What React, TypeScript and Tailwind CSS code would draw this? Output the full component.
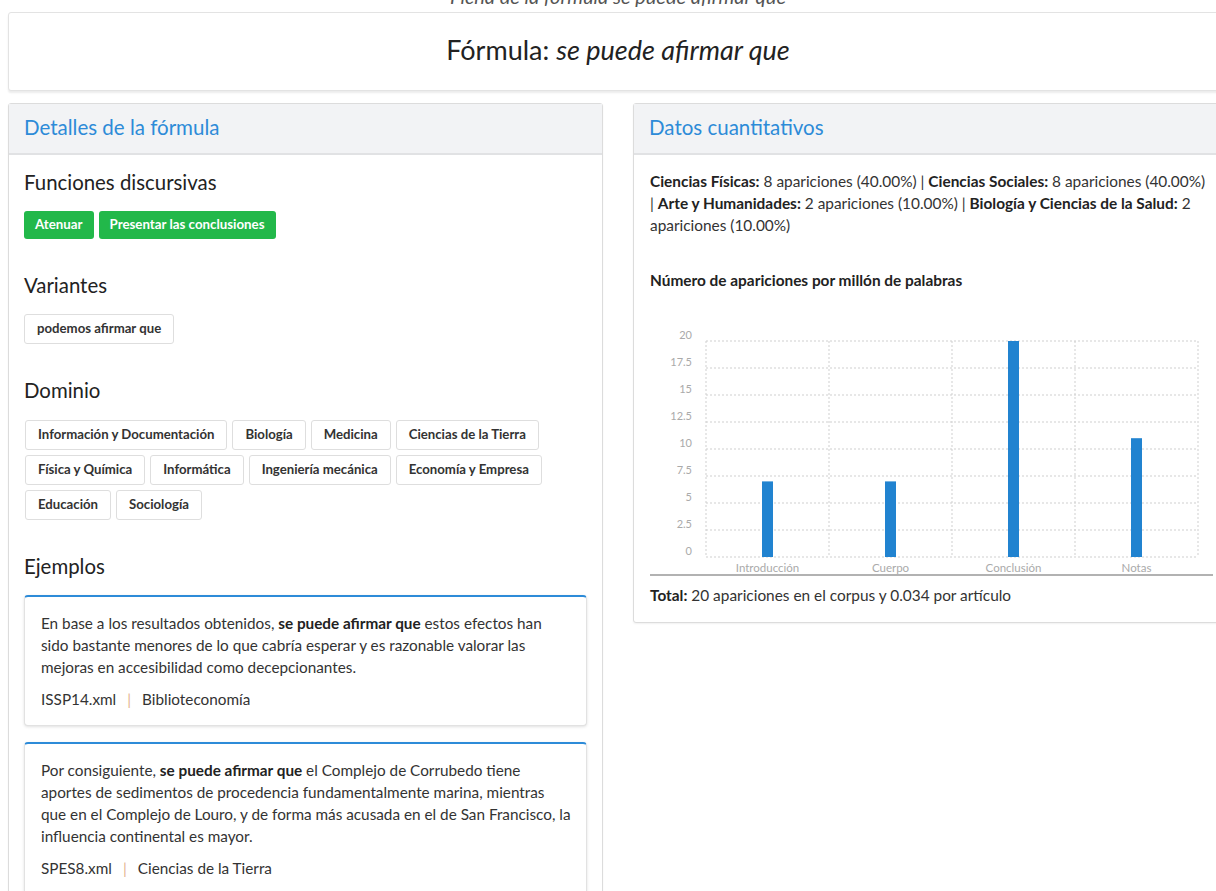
import React from "react";

const funciones = ["Atenuar", "Presentar las conclusiones"];
const variantes = ["podemos afirmar que"];
const dominios = [
  "Información y Documentación",
  "Biología",
  "Medicina",
  "Ciencias de la Tierra",
  "Física y Química",
  "Informática",
  "Ingeniería mecánica",
  "Economía y Empresa",
  "Educación",
  "Sociología",
];

const ejemplos = [
  {
    antes: "En base a los resultados obtenidos, ",
    despues:
      " estos efectos han sido bastante menores de lo que cabría esperar y es razonable valorar las mejoras en accesibilidad como decepcionantes.",
    archivo: "ISSP14.xml",
    area: "Biblioteconomía",
  },
  {
    antes: "Por consiguiente, ",
    despues:
      " el Complejo de Corrubedo tiene aportes de sedimentos de procedencia fundamentalmente marina, mientras que en el Complejo de Louro, y de forma más acusada en el de San Francisco, la influencia continental es mayor.",
    archivo: "SPES8.xml",
    area: "Ciencias de la Tierra",
  },
];

const secciones = [
  { label: "Introducción", value: 7 },
  { label: "Cuerpo", value: 7 },
  { label: "Conclusión", value: 20 },
  { label: "Notas", value: 11 },
];

function Tag({ children }: { children: React.ReactNode }) {
  return (
    <span className="inline-flex h-[30px] items-center rounded-[3px] border border-[#dedede] bg-white px-[12px] text-[13.2px] font-bold text-[#333]">
      {children}
    </span>
  );
}

function SectionTitle({ children, first }: { children: React.ReactNode; first?: boolean }) {
  return (
    <h3 className={`${first ? "" : "mt-[34px]"} mb-[17px] text-[20.4px] leading-[24px] text-[#222]`}>
      {children}
    </h3>
  );
}

function Panel({ title, children }: { title: string; children: React.ReactNode }) {
  return (
    <div className="rounded-[3px] border border-[#dcdcdc] bg-white shadow-[0_1px_2px_rgba(0,0,0,0.06)]">
      <div className="flex h-[51px] items-center border-b-2 border-[#e1e2e4] bg-[#f2f3f5] px-[15px] pb-[3px]">
        <h2 className="text-[20.5px] text-[#2d8bd8]">{title}</h2>
      </div>
      {children}
    </div>
  );
}

function Chart() {
  const left = 56;
  const right = 548;
  const top = 22;
  const bottom = 238;
  const max = 20;
  const colW = (right - left) / secciones.length;
  const y = (v: number) => bottom - (v / max) * (bottom - top);
  const ticks = [0, 2.5, 5, 7.5, 10, 12.5, 15, 17.5, 20];

  return (
    <svg width="563" height="258" className="block">
      {ticks.map((t) => (
        <g key={t}>
          <line x1={left} x2={right} y1={y(t)} y2={y(t)} stroke="#cfcfcf" strokeDasharray="2 2" />
          <text x={42} y={y(t) - 2} textAnchor="end" fontSize="11" fill="#aaa">
            {t}
          </text>
        </g>
      ))}
      {secciones.map((_, i) => (
        <line
          key={i}
          x1={left + i * colW}
          x2={left + i * colW}
          y1={top}
          y2={bottom}
          stroke="#cfcfcf"
          strokeDasharray="2 2"
        />
      ))}
      <line x1={right} x2={right} y1={top} y2={bottom} stroke="#cfcfcf" strokeDasharray="2 2" />
      {secciones.map((s, i) => {
        const cx = left + colW * i + colW / 2;
        return (
          <g key={s.label}>
            <rect x={cx - 5.5} y={y(s.value)} width="11" height={bottom - y(s.value)} fill="#2183d0" />
            <text x={cx} y={253} textAnchor="middle" fontSize="11.5" fill="#aaa">
              {s.label}
            </text>
          </g>
        );
      })}
      <line x1={0} x2={563} y1={256} y2={256} stroke="#999" strokeWidth="1.5" />
    </svg>
  );
}

export default function App() {
  return (
    <div
      className="h-[891px] w-[1216px] overflow-hidden bg-white text-[#333]"
      style={{ fontFamily: "Lato, 'Open Sans', sans-serif" }}
    >
      <div className="w-[1236px] px-[8px]">
        <p className="-mt-[14px] h-[26px] text-center text-[20px] italic leading-[20px] text-[#555]">
          Ficha de la fórmula se puede afirmar que
        </p>

        <div className="flex h-[79px] items-center justify-center rounded-[3px] border border-[#e3e3e3] bg-white pb-[2px] shadow-[0_2px_2px_rgba(0,0,0,0.08)]">
          <h1 className="text-[27px] text-[#222]">
            Fórmula: <em>se puede afirmar que</em>
          </h1>
        </div>

        <div className="mt-[12px] grid grid-cols-2 gap-[30px]">
          <Panel title="Detalles de la fórmula">
            <div className="px-[15px] pt-[15px] pb-[16px]">
              <SectionTitle first>Funciones discursivas</SectionTitle>
              <div className="flex flex-wrap gap-[5px]">
                {funciones.map((f) => (
                  <span
                    key={f}
                    className="inline-flex h-[28px] items-center rounded-[3px] bg-[#22b84a] px-[11px] text-[13.3px] font-bold text-white"
                  >
                    {f}
                  </span>
                ))}
              </div>

              <SectionTitle>Variantes</SectionTitle>
              <div className="flex flex-wrap gap-[5px]">
                {variantes.map((v) => (
                  <Tag key={v}>{v}</Tag>
                ))}
              </div>

              <SectionTitle>Dominio</SectionTitle>
              <div className="flex flex-wrap gap-[5px] pl-[1px] pt-[1px]">
                {dominios.map((d) => (
                  <Tag key={d}>{d}</Tag>
                ))}
              </div>

              <SectionTitle>Ejemplos</SectionTitle>
              <div className="flex flex-col gap-[16px]">
                {ejemplos.map((e) => (
                  <div
                    key={e.archivo}
                    className="rounded-[4px] border border-t-2 border-[#e2e2e2] border-t-[#2d8bd8] bg-white pt-[15px] pr-[15px] pb-[15px] pl-[16px] shadow-[0_1px_3px_rgba(0,0,0,0.12)]"
                  >
                    <p className="text-[15.3px] leading-[22px] text-[#333]">
                      {e.antes}
                      <b className="text-[#222]">se puede afirmar que</b>
                      {e.despues}
                    </p>
                    <p className="mt-[10px] text-[15.3px] leading-[22px] text-[#333]">
                      {e.archivo}
                      <span className="mx-[11px] text-[#e4b48f]">|</span>
                      {e.area}
                    </p>
                  </div>
                ))}
              </div>
            </div>
          </Panel>

          <div className="self-start">
            <Panel title="Datos cuantitativos">
              <div className="px-[16px] pt-[15px] pb-[16px]">
                <p className="text-[15.4px] leading-[22px]">
                  <b className="text-[#222]">Ciencias Físicas:</b> 8 apariciones (40.00%) |{" "}
                  <b className="text-[#222]">Ciencias Sociales:</b> 8 apariciones (40.00%) |{" "}
                  <b className="text-[#222]">Arte y Humanidades:</b> 2 apariciones (10.00%) |{" "}
                  <b className="text-[#222]">Biología y Ciencias de la Salud:</b> 2 apariciones (10.00%)
                </p>
                <p className="mt-[33px] text-[15.4px] font-bold leading-[22px] text-[#222]">
                  Número de apariciones por millón de palabras
                </p>
                <div className="mt-[28px]">
                  <Chart />
                </div>
                <p className="mt-[7px] text-[15.4px] leading-[22px]">
                  <b className="text-[#222]">Total:</b> 20 apariciones en el corpus y 0.034 por artículo
                </p>
              </div>
            </Panel>
          </div>
        </div>
      </div>
    </div>
  );
}
